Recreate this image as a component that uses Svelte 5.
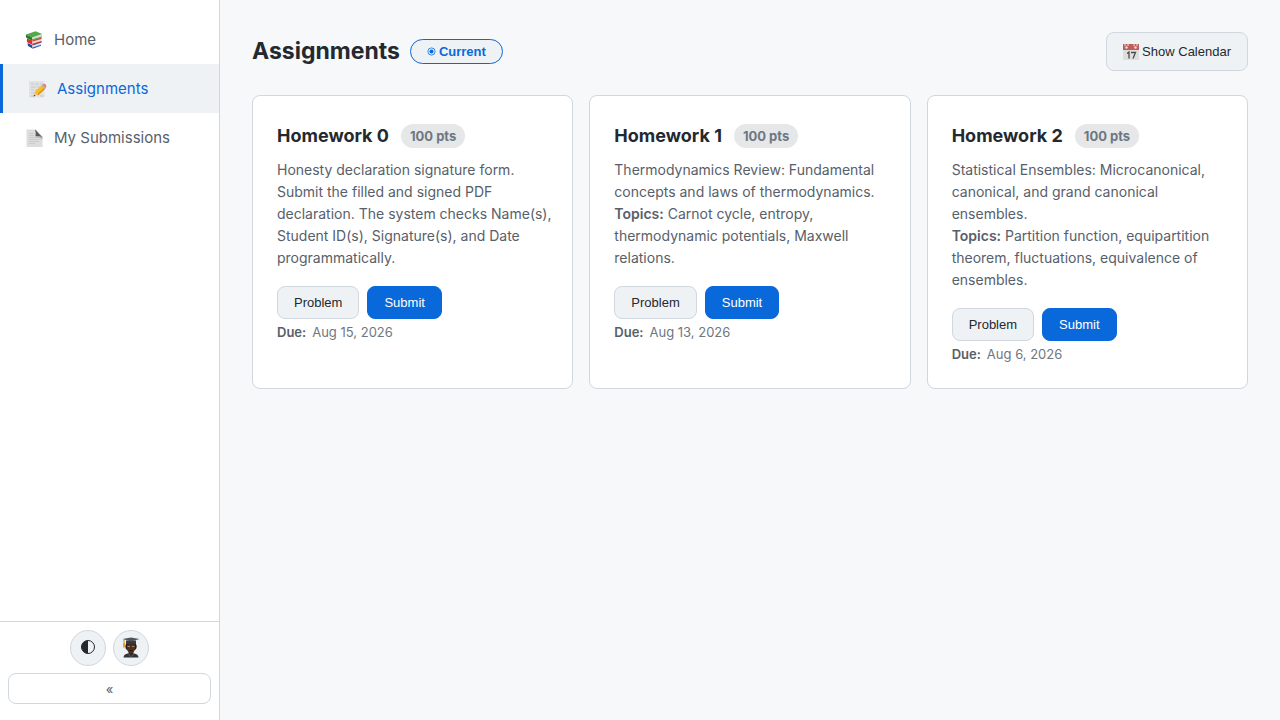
<script>
  let active = 'assignments';
  let collapsed = false;

  const links = [
    { id: 'home', label: 'Home' },
    { id: 'assignments', label: 'Assignments' },
    { id: 'submissions', label: 'My Submissions' }
  ];

  const assignments = [
    {
      title: 'Homework 0',
      points: 100,
      text: 'Honesty declaration signature form. Submit the filled and signed PDF declaration. The system checks Name(s), Student ID(s), Signature(s), and Date programmatically.',
      due: 'Aug 15, 2026'
    },
    {
      title: 'Homework 1',
      points: 100,
      text: 'Thermodynamics Review: Fundamental concepts and laws of thermodynamics.',
      topics: 'Carnot cycle, entropy, thermodynamic potentials, Maxwell relations.',
      due: 'Aug 13, 2026'
    },
    {
      title: 'Homework 2',
      points: 100,
      text: 'Statistical Ensembles: Microcanonical, canonical, and grand canonical ensembles.',
      topics: 'Partition function, equipartition theorem, fluctuations, equivalence of ensembles.',
      due: 'Aug 6, 2026'
    }
  ];
</script>

<div class="layout">
  <aside class="sidebar" class:collapsed>
    <nav>
      {#each links as link}
        <a
          href="#{link.id}"
          class:active={active === link.id}
          on:click={() => (active = link.id)}
        >
          <svg class="nav-icon" viewBox="0 0 20 20" aria-hidden="true">
            {#if link.id === 'home'}
              <path d="M3.500 13l5 2.500v3l-4.500-2.500z" fill="#27479b" />
              <path d="M8.500 15l8-2.500.5 2.500-8.500 3.500z" fill="#dfe4ec" />
              <path d="M8.500 17.600l8.500-2.800v.9l-8.500 3z" fill="#2f55ad" />
              <path d="M8.500 14.400l9-2.800v1l-9 2.900z" fill="#2f55ad" />
              <path d="M3 8.500l5.500 2v4.500l-5-2.500q-1-2-.5-4z" fill="#d3362d" />
              <path d="M8.500 10.500l8.500-2.200.5 3-9 3z" fill="#e9d6d4" />
              <path d="M8.500 10l9-2.500v1.400l-9 2.700z" fill="#dc4035" />
              <path d="M8.500 13.700l9-2.600v1l-9 2.900z" fill="#c42b26" />
              <path d="M2 4.500l6 2.700v3.300l-5.500-2.500q-1-1.500-.5-3.500z" fill="#2b7a2e" />
              <path d="M8 7.500l10-3-.3 2.500-9.700 3z" fill="#cfdfc8" />
              <path d="M2 4.500l9.500-3.300 6.700 2.800-10.200 3.500z" fill="#52a84a" />
              <path d="M8 9.400l10-3v.8l-10 3.100z" fill="#378b37" />
            {:else if link.id === 'assignments'}
              <path d="M2 2h15.500v16.500h-15.500z" fill="#e2e2e3" />
              <path
                d="M4 5h3m1 0h4m1 0h3M4 8h5m1 0h4M4 11h3m1 0h3M4 14h4M4 17h3m6 0h4"
                stroke="#c7c8cb"
                stroke-width="1"
              />
              <path d="M6.500 17.500l1.500-4.500 3.500 3z" fill="#e8c590" />
              <path d="M6.500 17.500l.6-1.800 1.200 1z" fill="#343434" />
              <path d="M7.500 13l7-6.500 3.500 3.500-6.500 6z" fill="#f7bd25" />
              <path d="M10.300 15.400l6.700-6.400 1 1-6.500 6z" fill="#d28d17" />
              <path d="M14.500 6.500l1-1 3.500 3.500-1 1z" fill="#a7a9ad" />
              <path d="M15.500 5.500q2.500-1.500 3.500.5.600 1.500 0 3z" fill="#ee7777" />
            {:else}
              <path d="M2.500 1.500h9l7 7v10.500h-16z" fill="#dddddd" />
              <path
                d="M5 5.500h5m-5 2h5m-5 2h9m-9 2h10m-10 2h10m-10 2h6"
                stroke="#cbcbcb"
                stroke-width="1"
              />
              <path d="M11 1.500q3 1 3 4.500 3 0 4.500 3.500v2l-6.500-2.500z" fill="#b9b9b9" />
              <path d="M11 1.500l7.500 8q-3.500-2-7-1.200 1-3.300-.5-6.800z" fill="#595959" />
            {/if}
          </svg>
          <span>{link.label}</span>
        </a>
      {/each}
    </nav>

    <div class="sidebar-footer">
      <div class="round-buttons">
        <button class="round" aria-label="Toggle theme">
          <svg width="16" height="16" viewBox="0 0 16 16" aria-hidden="true">
            <circle cx="8" cy="7" r="6.500" fill="none" stroke="#24292f" />
            <path d="M8 .5a6.500 6.500 0 0 0 0 13z" fill="#24292f" />
          </svg>
        </button>
        <button class="round" aria-label="Student profile">
          <svg width="20" height="22" viewBox="0 0 20 22" aria-hidden="true">
            <path d="M2.500 20.500q.2-3.500 4.500-4h6q4.300.5 4.500 4z" fill="#30343a" />
            <path d="M7.500 13h5v3.500l-2.500 2-2.500-2z" fill="#3b2419" />
            <path d="M7.300 16.500l2.700 2.500 2.700-2.500 1 .4-3.700 3.600-3.700-3.600z" fill="#4d5257" />
            <ellipse cx="10" cy="9.500" rx="5.700" ry="5" fill="#231c1a" />
            <path d="M6 8q4-2 8 0v4q-1 4-4 4.300-3-.3-4-4.300z" fill="#4f3023" />
            <path d="M6.500 9.500h2.500m2 0h2.500" stroke="#a58669" stroke-width="1" />
            <path d="M8.500 13.500h3" stroke="#241512" stroke-width="1" />
            <path d="M5 3.500h10v4q-5-1.700-10 0z" fill="#363b3e" />
            <path d="M1.500 2l8.500-1.500 8.500 1.500-8.500 2.500z" fill="#50565a" />
            <path d="M3 2.500v4" stroke="#c78b2e" stroke-width="1" />
            <path d="M2 6h2l.5 4.500h-2.500z" fill="#eda12e" />
          </svg>
        </button>
      </div>
      <button
        class="collapse"
        aria-label="Collapse sidebar"
        on:click={() => (collapsed = !collapsed)}>«</button
      >
    </div>
  </aside>

  <main>
    <header>
      <h1>Assignments</h1>
      <button class="current">
        <svg width="9" height="9" viewBox="0 0 9 9" aria-hidden="true">
          <circle cx="4.500" cy="4.500" r="3.600" fill="none" stroke="#0969da" stroke-width=".8" />
          <circle cx="4.500" cy="4.500" r="2" fill="#0969da" />
        </svg>
        Current
      </button>
      <button class="calendar">
        <svg width="16" height="16" viewBox="0 0 16 16" aria-hidden="true">
          <path d="M0 0h16v16H0z" fill="#dedede" />
          <path d="M0 0h16v6H0z" fill="#bd5e5e" />
          <path d="M2 0v2m3-2v2m6-2v2m3-2v2" stroke="#f1dddd" stroke-width="1" />
          <circle cx="3.500" cy="3.500" r="1.200" fill="#f0dada" />
          <circle cx="12.500" cy="3.500" r="1.200" fill="#f0dada" />
          <path
            d="M4 9.500l2-1.500v6.500M8 8.500h4.500l-2.500 6"
            fill="none"
            stroke="#4b4b4b"
            stroke-width="1.300"
          />
        </svg>
        Show Calendar
      </button>
    </header>

    <div class="cards">
      {#each assignments as item}
        <article>
          <div class="card-title">
            <h2>{item.title}</h2>
            <span class="points">{item.points} pts</span>
          </div>
          <p class="text">
            {item.text}
            {#if item.topics}
              <br /><strong>Topics:</strong> {item.topics}
            {/if}
          </p>
          <div class="actions">
            <button>Problem</button>
            <button class="primary">Submit</button>
          </div>
          <p class="due"><strong>Due:</strong><span>{item.due}</span></p>
        </article>
      {/each}
    </div>
  </main>
</div>

<style>
  :global(body) {
    background: #f6f8fa;
    color: #24292f;
    font-family: Inter, 'Liberation Sans', sans-serif;
  }

  .layout {
    display: flex;
    min-height: 100vh;
  }

  .sidebar {
    box-sizing: border-box;
    display: flex;
    flex: none;
    flex-direction: column;
    justify-content: space-between;
    width: 220px;
    height: 100vh;
    padding-top: 15px;
    background: #fff;
    border-right: 1px solid #d0d7de;
  }

  .sidebar.collapsed {
    width: 96px;
  }

  .collapsed nav span {
    display: none;
  }

  nav a {
    display: flex;
    align-items: center;
    gap: 10px;
    padding: 12px 24px;
    color: #57606a;
    font-size: 15px;
    line-height: 25px;
    text-decoration: none;
  }

  nav a.active {
    background: #eef2f5;
    border-left: 3px solid #0969da;
    color: #0969da;
  }

  .nav-icon {
    width: 20px;
    height: 20px;
  }

  .sidebar-footer {
    display: flex;
    flex-direction: column;
    gap: 7px;
    padding: 8px 8px 16px;
    border-top: 1px solid #d0d7de;
  }

  .round-buttons {
    display: flex;
    justify-content: center;
    gap: 7px;
  }

  button {
    border: 1px solid #d0d7de;
    border-radius: 8px;
    background: #eef2f5;
    color: #24292f;
    font-family: 'Liberation Sans', Arial, sans-serif;
    font-size: 13px;
    cursor: pointer;
  }

  .round {
    display: flex;
    align-items: center;
    justify-content: center;
    width: 36px;
    height: 36px;
    padding: 0;
    border-radius: 50%;
  }

  .collapse {
    height: 31px;
    padding: 0;
    background: #fff;
    color: #57606a;
    font-family: Inter, sans-serif;
  }

  main {
    flex: 1;
    min-width: 0;
    padding: 32px;
  }

  header {
    display: flex;
    align-items: center;
    gap: 10px;
    margin-bottom: 24px;
  }

  h1 {
    margin: 0;
    font-size: 23px;
    font-weight: 700;
    line-height: 39px;
  }

  .current {
    display: flex;
    align-items: center;
    gap: 3px;
    padding: 4px 16px;
    border-color: #0969da;
    border-radius: 16px;
    color: #0969da;
    font-weight: 600;
    line-height: 15px;
  }

  .calendar {
    display: flex;
    align-items: center;
    gap: 3px;
    margin-left: auto;
    padding: 0 16px;
    line-height: 37px;
  }

  .cards {
    display: grid;
    grid-template-columns: repeat(3, minmax(0, 1fr));
    gap: 16px;
  }

  article {
    padding: 24px 20px 24px 24px;
    background: #fff;
    border: 1px solid #d0d7de;
    border-radius: 8px;
  }

  .card-title {
    display: flex;
    align-items: center;
    gap: 12px;
    margin-bottom: 8px;
  }

  h2 {
    margin: 0;
    font-size: 18px;
    font-weight: 700;
    line-height: 31px;
  }

  .points {
    padding: 2px 9px;
    border-radius: 12px;
    background: #e5e7e9;
    color: #6e7781;
    font-size: 13px;
    font-weight: 700;
    line-height: 20px;
  }

  .text {
    margin: 0 0 17px;
    color: #57606a;
    font-size: 14px;
    line-height: 22px;
  }

  .actions {
    display: flex;
    gap: 8px;
    margin-bottom: 4px;
  }

  .actions button {
    padding: 8px 16px;
    line-height: 15px;
  }

  .actions .primary {
    background: #0969da;
    border-color: #0969da;
    color: #fff;
  }

  .due {
    display: flex;
    gap: 6px;
    margin: 0;
    color: #6e7781;
    font-size: 13px;
    line-height: 19px;
  }

  strong {
    color: #57606a;
    font-weight: 600;
  }
</style>
